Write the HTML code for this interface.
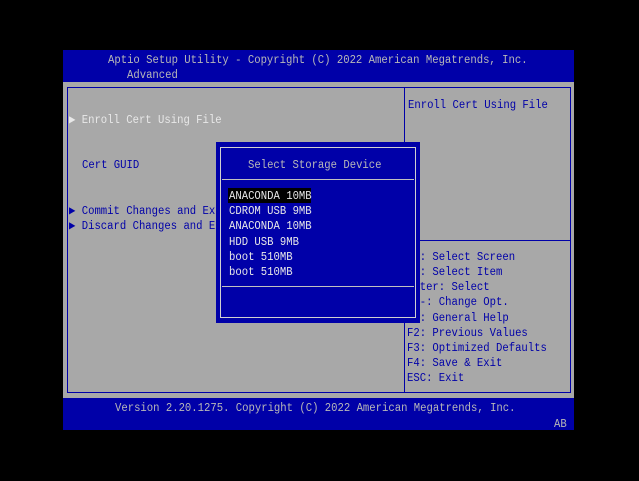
<!DOCTYPE html>
<html><head><style>
body{margin:0;width:639px;height:481px;background:#000;position:relative;overflow:hidden;font-family:"Liberation Mono",monospace;font-size:10.6px;}
div{position:absolute;}
.t{white-space:pre;line-height:12px;transform:scaleY(1.15);transform-origin:0 0;margin-top:1px;}
.b{color:#0000a8}.w{color:#e8e8e8}.g{color:#b8b8b8}
</style></head><body>
<div style="left:63px;top:50px;width:511px;height:380px;background:#0000a8"></div>
<div style="left:63px;top:82px;width:511px;height:316px;background:#a8a8a8"></div>
<div style="left:121px;top:67px;width:62px;height:15px;background:#0000a8"></div>
<div class="t g" style="left:108px;top:53px">Aptio Setup Utility - Copyright (C) 2022 American Megatrends, Inc.</div>
<div class="t g" style="left:127px;top:68px">Advanced</div>
<div style="left:67px;top:87px;width:504px;height:306px;border:1px solid #0000a8;box-sizing:border-box"></div>
<div style="left:404px;top:87px;width:1px;height:306px;background:#0000a8"></div>
<div style="left:404px;top:240px;width:167px;height:1px;background:#0000a8"></div>
<div class="t w" style="left:69px;top:113px">▶ Enroll Cert Using File</div>
<div class="t b" style="left:82px;top:158px">Cert GUID</div>
<div class="t b" style="left:69px;top:204px">▶ Commit Changes and Exit</div>
<div class="t b" style="left:69px;top:219px">▶ Discard Changes and Exit</div>
<div class="t b" style="left:408px;top:98px">Enroll Cert Using File</div>
<div class="t b" style="left:407px;top:250px;line-height:13.15px">→←: Select Screen
↑↓: Select Item
Enter: Select
+/-: Change Opt.
F1: General Help
F2: Previous Values
F3: Optimized Defaults
F4: Save &amp; Exit
ESC: Exit</div>
<div style="left:216px;top:142px;width:204px;height:181px;background:#0000a8"></div>
<div style="left:220px;top:147px;width:196px;height:171px;border:1px solid #d0d0d0;box-sizing:border-box"></div>
<div style="left:222px;top:179px;width:192px;height:1px;background:#c0c0c0"></div>
<div style="left:222px;top:286px;width:192px;height:1px;background:#c0c0c0"></div>
<div class="t g" style="left:248px;top:158px">Select Storage Device</div>
<div style="left:228px;top:188px;width:83px;height:15px;background:#000"></div>
<div class="t w" style="left:229px;top:189px;line-height:13.2px">ANACONDA 10MB
CDROM USB 9MB
ANACONDA 10MB
HDD USB 9MB
boot 510MB
boot 510MB</div>
<div class="t g" style="left:115px;top:401px">Version 2.20.1275. Copyright (C) 2022 American Megatrends, Inc.</div>
<div class="t g" style="left:554px;top:417px">AB</div>
</body></html>
